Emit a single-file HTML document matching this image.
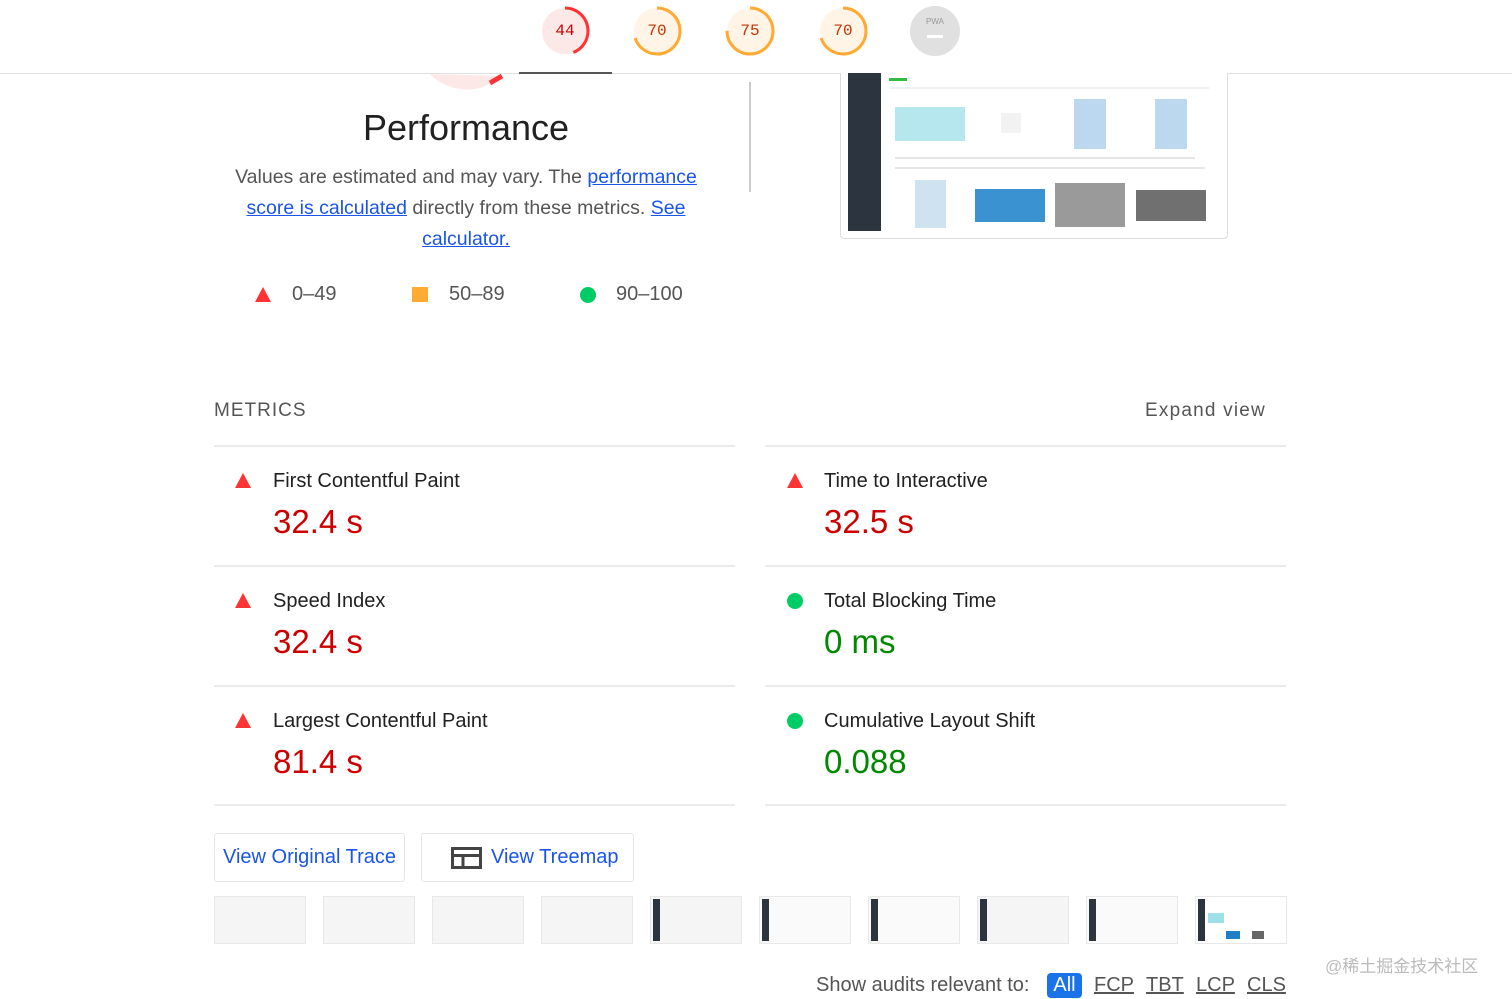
<!DOCTYPE html>
<html><head><meta charset="utf-8"><style>
*{margin:0;padding:0;box-sizing:border-box}
body{width:1512px;height:999px;overflow:hidden;background:#fff;font-family:"Liberation Sans","Noto Sans CJK SC",sans-serif;position:relative;color:#212121}
.a{position:absolute}
.g{position:absolute;top:6px;width:50px;height:50px}
.g span{position:absolute;left:0;top:0;width:50px;height:50px;line-height:50px;text-align:center;font-family:"Liberation Mono",monospace;font-size:16px}
.lnk{color:#1a55e8;text-decoration:underline}
.hr{position:absolute;height:2px;background:#ebebeb}
.mt{position:absolute;font-size:20px;color:#212121}
.mv{position:absolute;font-size:33px}
.tri{position:absolute;width:0;height:0;border-left:8px solid transparent;border-right:8px solid transparent;border-bottom:15px solid #f33}
.dot{position:absolute;width:16px;height:16px;border-radius:50%;background:#0c6}
.th{position:absolute;top:896px;width:92px;height:48px;background:#f5f5f5;border:1px solid #e8e8e8}
.th i{position:absolute;left:2px;top:2px;bottom:2px;width:7px;background:#2c3440}
.btn{position:absolute;top:833px;height:49px;border:1px solid #e6e6e6;border-radius:3px;color:#1a55e8;font-size:20px;line-height:47px}
.bl{position:absolute;top:974px;font-size:20px;color:#555;text-decoration:underline}
.ln{position:absolute;height:2px;background:#e6e6e6}
</style></head><body>
<div class="a" style="left:0;top:73px;width:1512px;height:1px;background:#e0e0e0"></div>
<div class="a" style="left:519px;top:72px;width:93px;height:2px;background:#555"></div>
<div class="g" style="left:540px"><svg width="50" height="50"><circle cx="25" cy="25" r="23" fill="#fde8e8"/><circle cx="25" cy="25" r="23" fill="none" stroke="#f33" stroke-width="3" stroke-dasharray="63.6 200" transform="rotate(-90 25 25)"/></svg><span style="color:#c00">44</span></div>
<div class="g" style="left:632px"><svg width="50" height="50"><circle cx="25" cy="25" r="23" fill="#fff4e6"/><circle cx="25" cy="25" r="23" fill="none" stroke="#fa3" stroke-width="3" stroke-dasharray="101 200" transform="rotate(-90 25 25)"/></svg><span style="color:#c33300">70</span></div>
<div class="g" style="left:725px"><svg width="50" height="50"><circle cx="25" cy="25" r="23" fill="#fff4e6"/><circle cx="25" cy="25" r="23" fill="none" stroke="#fa3" stroke-width="3" stroke-dasharray="108.4 200" transform="rotate(-90 25 25)"/></svg><span style="color:#c33300">75</span></div>
<div class="g" style="left:818px"><svg width="50" height="50"><circle cx="25" cy="25" r="23" fill="#fff4e6"/><circle cx="25" cy="25" r="23" fill="none" stroke="#fa3" stroke-width="3" stroke-dasharray="101 200" transform="rotate(-90 25 25)"/></svg><span style="color:#c33300">70</span></div>
<div class="g" style="left:910px"><svg width="50" height="50"><circle cx="25" cy="25" r="25" fill="#e0e0e0"/><text x="25" y="18" font-size="8" fill="#999" text-anchor="middle" font-family="Liberation Sans">PWA</text><rect x="17" y="29" width="16" height="3" fill="#fff"/></svg></div>
<svg class="a" style="left:420px;top:74px" width="100" height="16"><path d="M10 0 A52 52 0 0 0 60 14 A52 52 0 0 0 80 2" fill="#fde8e8"/><path d="M70 9 L82 2" stroke="#f33" stroke-width="5"/></svg>
<div class="a" style="left:266px;top:107px;width:400px;text-align:center;font-size:36px;color:#212121">Performance</div>
<div class="a" style="left:216px;top:162px;width:500px;text-align:center;font-size:19.5px;line-height:31px;color:#555">Values are estimated and may vary. The <span class="lnk">performance</span><br><span class="lnk">score is calculated</span> directly from these metrics. <span class="lnk">See</span><br><span class="lnk">calculator.</span></div>
<div class="tri" style="left:255px;top:287px"></div>
<div class="a" style="left:292px;top:283px;font-size:20px;color:#555">0–49</div>
<div class="a" style="left:412px;top:287px;width:16px;height:15px;background:#fa3"></div>
<div class="a" style="left:449px;top:283px;font-size:20px;color:#555">50–89</div>
<div class="dot" style="left:580px;top:287px"></div>
<div class="a" style="left:616px;top:283px;font-size:20px;color:#555">90–100</div>
<div class="a" style="left:749px;top:82px;width:2px;height:110px;background:#ccc"></div>
<div class="a" style="left:840px;top:73px;width:388px;height:166px;border:1px solid #ddd;border-top:none;border-radius:0 0 4px 4px;background:#fff;overflow:hidden">
<div class="a" style="left:7px;top:0;width:33px;height:158px;background:#2c3440"></div>
<div class="a" style="left:48px;top:5px;width:18px;height:3px;background:#3b4"></div>
<div class="ln" style="left:48px;top:14px;width:320px;background:#f0f0f0"></div>
<div class="a" style="left:54px;top:34px;width:70px;height:34px;background:#b6e6ee"></div>
<div class="a" style="left:160px;top:40px;width:20px;height:20px;background:#f2f2f2"></div>
<div class="a" style="left:233px;top:26px;width:32px;height:50px;background:#bcd8ee"></div>
<div class="a" style="left:314px;top:26px;width:32px;height:50px;background:#bcd8ee"></div>
<div class="ln" style="left:54px;top:84px;width:300px"></div>
<div class="ln" style="left:54px;top:94px;width:310px"></div>
<div class="a" style="left:74px;top:107px;width:31px;height:48px;background:#cfe2ef"></div>
<div class="a" style="left:134px;top:116px;width:70px;height:33px;background:#3a92d0"></div>
<div class="a" style="left:214px;top:110px;width:70px;height:44px;background:#9a9a9a"></div>
<div class="a" style="left:295px;top:117px;width:70px;height:31px;background:#707070"></div>
</div>
<div class="a" style="left:214px;top:400px;font-size:19px;letter-spacing:1px;color:#555">METRICS</div>
<div class="a" style="left:1145px;top:400px;font-size:19px;letter-spacing:1.2px;color:#555">Expand view</div>
<div class="hr" style="left:214px;top:445px;width:521px"></div><div class="hr" style="left:765px;top:445px;width:521px"></div>
<div class="hr" style="left:214px;top:565px;width:521px"></div><div class="hr" style="left:765px;top:565px;width:521px"></div>
<div class="hr" style="left:214px;top:685px;width:521px"></div><div class="hr" style="left:765px;top:685px;width:521px"></div>
<div class="hr" style="left:214px;top:804px;width:521px"></div><div class="hr" style="left:765px;top:804px;width:521px"></div>
<div class="tri" style="left:235px;top:473px"></div><div class="mt" style="left:273px;top:470px">First Contentful Paint</div><div class="mv" style="left:273px;top:503px;color:#c00">32.4 s</div>
<div class="tri" style="left:787px;top:473px"></div><div class="mt" style="left:824px;top:470px">Time to Interactive</div><div class="mv" style="left:824px;top:503px;color:#c00">32.5 s</div>
<div class="tri" style="left:235px;top:593px"></div><div class="mt" style="left:273px;top:590px">Speed Index</div><div class="mv" style="left:273px;top:623px;color:#c00">32.4 s</div>
<div class="dot" style="left:787px;top:593px"></div><div class="mt" style="left:824px;top:590px">Total Blocking Time</div><div class="mv" style="left:824px;top:623px;color:#080">0 ms</div>
<div class="tri" style="left:235px;top:713px"></div><div class="mt" style="left:273px;top:710px">Largest Contentful Paint</div><div class="mv" style="left:273px;top:743px;color:#c00">81.4 s</div>
<div class="dot" style="left:787px;top:713px"></div><div class="mt" style="left:824px;top:710px">Cumulative Layout Shift</div><div class="mv" style="left:824px;top:743px;color:#080">0.088</div>
<div class="btn" style="left:214px;width:191px;text-align:center">View Original Trace</div>
<div class="btn" style="left:421px;width:213px;padding-left:69px">View Treemap</div>
<svg class="a" style="left:451px;top:847px" width="31" height="22"><rect x="1.5" y="1.5" width="28" height="19" fill="none" stroke="#444" stroke-width="3"/><path d="M1.5 8.5H29.5M12 8.5V20" stroke="#444" stroke-width="3"/></svg>
<div class="th" style="left:214px"></div><div class="th" style="left:323px"></div><div class="th" style="left:432px"></div><div class="th" style="left:541px"></div>
<div class="th" style="left:650px"><i></i></div><div class="th" style="left:759px;background:#fafafa"><i></i></div><div class="th" style="left:868px;background:#fafafa"><i></i></div><div class="th" style="left:977px"><i></i></div>
<div class="th" style="left:1086px;background:#fafafa"><i></i></div>
<div class="th" style="left:1195px;background:#fff"><i></i><div class="a" style="left:12px;top:16px;width:16px;height:10px;background:#9de0ea"></div><div class="a" style="left:30px;top:34px;width:14px;height:8px;background:#1e7fc8"></div><div class="a" style="left:56px;top:34px;width:12px;height:8px;background:#666"></div></div>
<div class="a" style="left:816px;top:974px;font-size:20px;color:#555">Show audits relevant to:</div>
<div class="a" style="left:1047px;top:973px;width:35px;height:25px;background:#1a73e8;border-radius:4px;color:#fff;font-size:20px;text-align:center;line-height:25px">All</div>
<div class="bl" style="left:1094px">FCP</div>
<div class="bl" style="left:1146px">TBT</div>
<div class="bl" style="left:1196px">LCP</div>
<div class="bl" style="left:1247px">CLS</div>
<div class="a" style="left:1325px;top:952px;font-size:17px;color:#bbb">@稀土掘金技术社区</div>
</body></html>
